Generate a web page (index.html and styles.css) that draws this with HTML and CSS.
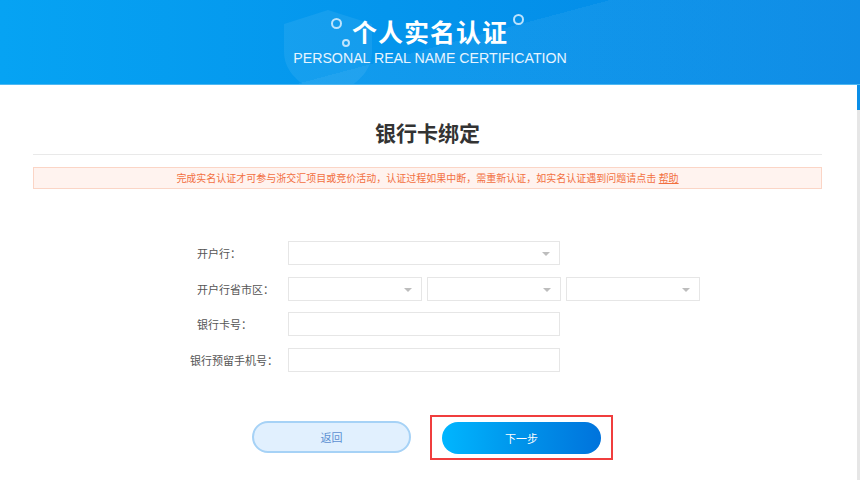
FILE: index.html
```html
<!DOCTYPE html>
<html lang="zh-CN">
<head>
    <meta charset="UTF-8">
    <title>银行卡绑定</title>
    <link rel="stylesheet" href="styles.css">
</head>
<body>
<div class="banner">
    <svg class="shield" width="96" height="86" viewBox="0 0 96 86">
        <path d="M48 2 L92 16 L92 44 C92 66 72 80 48 90 C24 80 4 66 4 44 L4 16 Z" fill="#ffffff" fill-opacity="0.07"/>
    </svg>
    <div class="banner-title">
        <span class="bubble bubble-a"></span>
        <span class="bubble bubble-b"></span>
        <span class="bubble bubble-c"></span>
        <h1>个人实名认证</h1>
    </div>
    <p class="banner-sub">PERSONAL REAL NAME CERTIFICATION</p>
</div>

<div class="page">
    <div class="main">
        <h2 class="title">银行卡绑定</h2>
        <div class="notice">完成实名认证才可参与浙交汇项目或竞价活动，认证过程如果中断，需重新认证，如实名认证遇到问题请点击 <a href="#">帮助</a></div>

        <div class="form">
            <div class="row">
                <label>开户行：</label>
                <div class="select select-wide"><i class="caret"></i></div>
            </div>
            <div class="row">
                <label>开户行省市区：</label>
                <div class="select select-third"><i class="caret"></i></div>
                <div class="select select-third"><i class="caret"></i></div>
                <div class="select select-third"><i class="caret"></i></div>
            </div>
            <div class="row">
                <label>银行卡号：</label>
                <input type="text" class="input">
            </div>
            <div class="row">
                <label class="label-long">银行预留手机号：</label>
                <input type="text" class="input">
            </div>
        </div>

        <div class="btns">
            <button class="btn btn-back">返回</button>
            <div class="focus-box">
                <button class="btn btn-next">下一步</button>
            </div>
        </div>
    </div>
    <div class="rail"><div class="thumb"></div></div>
</div>
</body>
</html>
```

FILE: styles.css
```css
* {
    margin: 0;
    padding: 0;
    box-sizing: border-box;
}

body {
    width: 860px;
    height: 480px;
    overflow: hidden;
    background: #ffffff;
    font-family: "Noto Sans CJK SC", "Liberation Sans", sans-serif;
    color: #333333;
}

/* 顶部蓝色横幅 */
.banner {
    position: relative;
    height: 85px;
    overflow: hidden;
    background: linear-gradient(90deg, #06a3f3 0%, #0495ec 45%, #0387e5 100%);
    display: flex;
    flex-direction: column;
    align-items: center;
    padding-top: 14px;
    border-bottom: 1px solid #4fb8f2;
}

.banner::after {
    content: "";
    position: absolute;
    left: 0;
    top: 0;
    right: 0;
    bottom: 0;
    background: linear-gradient(165deg, rgba(255, 255, 255, 0) 52%, rgba(255, 255, 255, 0.05) 52%);
}

.shield {
    position: absolute;
    left: 280px;
    top: 8px;
}

.banner-title {
    position: relative;
    z-index: 1;
}

.banner-title h1 {
    font-size: 25px;
    line-height: 34px;
    font-weight: bold;
    color: #ffffff;
    letter-spacing: 1px;
}

.bubble {
    position: absolute;
    border: 2px solid rgba(220, 240, 255, 0.85);
    border-radius: 50%;
}

.bubble-a {
    width: 11px;
    height: 11px;
    left: -21px;
    top: 4px;
}

.bubble-b {
    width: 8px;
    height: 8px;
    left: -10px;
    top: 25px;
}

.bubble-c {
    width: 11px;
    height: 11px;
    right: -16px;
    top: 0;
}

.banner-sub {
    position: relative;
    z-index: 1;
    font-family: "Liberation Sans", sans-serif;
    font-size: 14.2px;
    line-height: 18px;
    color: #e6f4ff;
    margin-top: 1px;
}

/* 内容区 */
.page {
    display: flex;
    height: 395px;
}

.main {
    flex: 1;
    padding-top: 32px;
}

.rail {
    width: 3px;
    background: #e6e6e6;
}

.thumb {
    height: 25px;
    background: #0a8ee8;
}

.title {
    margin: 0 35px 0 33px;
    padding-bottom: 7px;
    border-bottom: 1px solid #e9e9e9;
    text-align: center;
    font-size: 21px;
    line-height: 30px;
    font-weight: bold;
    color: #333333;
}

.notice {
    margin: 12px 35px 0 33px;
    height: 22px;
    line-height: 20px;
    border: 1px solid #fbd5c6;
    background: #fff3ef;
    text-align: center;
    font-size: 10px;
    color: #f2703f;
}

.notice a {
    color: #f2703f;
}

/* 表单 */
.form {
    margin: 52px 0 0 190px;
    display: flex;
    flex-direction: column;
    gap: 11.5px;
}

.row {
    display: flex;
    align-items: center;
    height: 24px;
    gap: 5.5px;
}

.row label {
    width: 92.5px;
    padding-left: 7px;
    font-size: 11px;
    color: #555555;
}

.row .label-long {
    padding-left: 0;
}

.select,
.input {
    position: relative;
    height: 24px;
    border: 1px solid #e6e6e6;
    background: #ffffff;
}

.select-wide,
.input {
    width: 272px;
}

.select-third {
    width: 133.5px;
}

.caret {
    position: absolute;
    right: 9px;
    top: 10px;
    width: 0;
    height: 0;
    border-left: 4px solid transparent;
    border-right: 4px solid transparent;
    border-top: 4px solid #bdbdbd;
}

/* 按钮 */
.btns {
    display: flex;
    justify-content: center;
    align-items: center;
    gap: 19px;
    margin-top: 43px;
    padding-left: 8px;
}

.btn {
    width: 159px;
    height: 32px;
    border-radius: 16px;
    font-family: "Noto Sans CJK SC", sans-serif;
    font-size: 11px;
    cursor: pointer;
}

.btn-back {
    background: #e1f0fe;
    border: 2px solid #a6d2f6;
    color: #5b8fd2;
}

.btn-next {
    border: none;
    background: linear-gradient(90deg, #00b6ff 0%, #0093ea 50%, #0073dc 100%);
    color: #ffffff;
}

.focus-box {
    border: 2px solid #f03e3e;
    padding: 5px 10px 4px;
}
```
